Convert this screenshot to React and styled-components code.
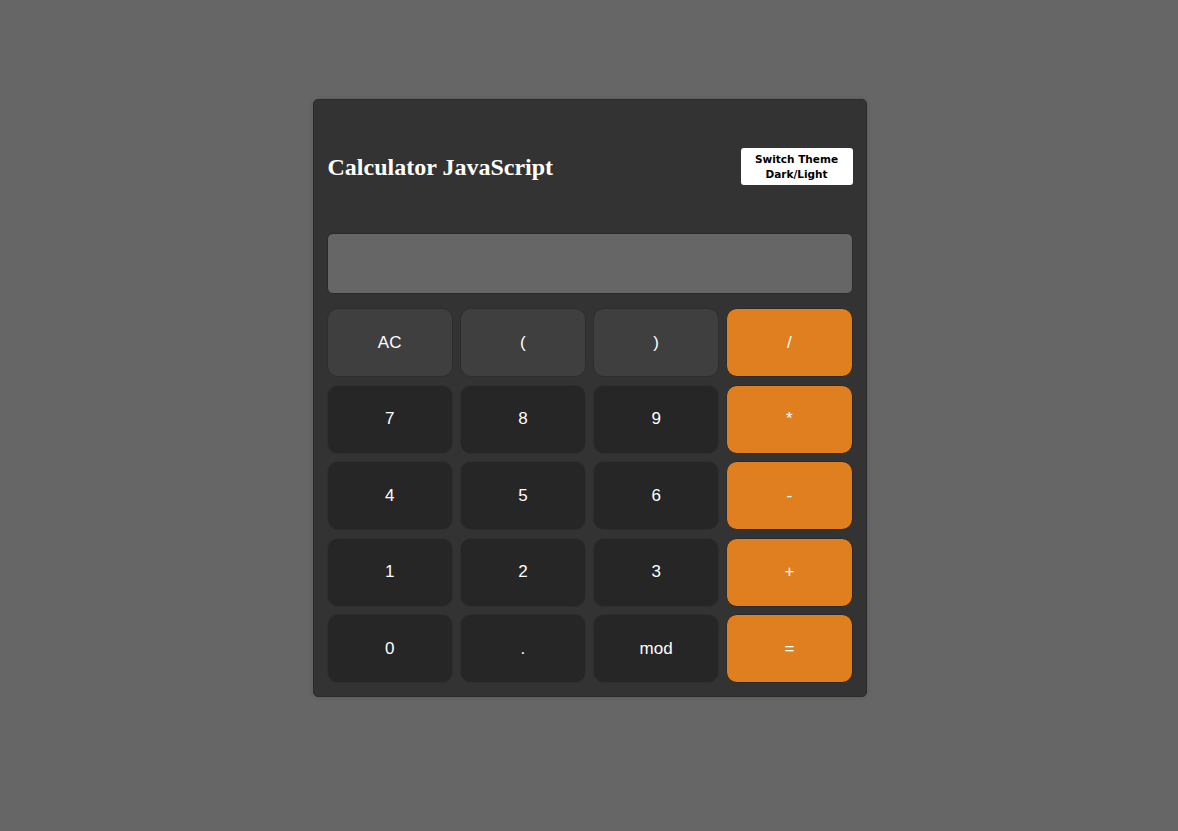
import React, { useState } from 'react'
import styled, { createGlobalStyle } from 'styled-components'

const keys = [
    { label: 'AC', kind: 'func' },
    { label: '(', kind: 'func' },
    { label: ')', kind: 'func' },
    { label: '/', kind: 'op' },
    { label: '7' }, { label: '8' }, { label: '9' },
    { label: '*', kind: 'op' },
    { label: '4' }, { label: '5' }, { label: '6' },
    { label: '-', kind: 'op' },
    { label: '1' }, { label: '2' }, { label: '3' },
    { label: '+', kind: 'op' },
    { label: '0' }, { label: '.' }, { label: 'mod' },
    { label: '=', kind: 'op' },
]

const App = () => {
    const [value, setValue] = useState('')

    return <Page>
        <GlobalStyle />
        <Card>
            <Header>
                <Title>Calculator JavaScript</Title>
                <ThemeButton>Switch Theme<br />Dark/Light</ThemeButton>
            </Header>

            <Display value={value} readOnly />

            <Keys>
                {keys.map(item => (
                    <Key key={item.label} kind={item.kind} onClick={() => setValue(value + item.label)}>
                        {item.label}
                    </Key>
                ))}
            </Keys>
        </Card>
    </Page>
}

const GlobalStyle = createGlobalStyle`
    html, body {
        margin: 0;
        background: #666666;
    }
`

const Page = styled.div`
    min-height: 831px;
    display: flex;
    justify-content: center;
    align-items: flex-start;
    padding-top: 99px;
    padding-left: 1px;
    box-sizing: border-box;
`

const Card = styled.div`
    width: 554px;
    box-sizing: border-box;
    background: #333333;
    border: 1px solid #2b2b2b;
    border-radius: 5px;
    box-shadow: 0 0 4px rgba(0, 0, 0, 0.15);
    padding: 0 13px 13px 13px;
    display: flex;
    flex-direction: column;
`

const Header = styled.div`
    height: 133px;
    display: flex;
    justify-content: space-between;
    align-items: center;
`

const Title = styled.h1`
    margin: 0 0 0 1px;
    font-family: "Liberation Serif", serif;
    font-weight: 700;
    font-size: 24px;
    line-height: 28px;
    color: #ffffff;
`

const ThemeButton = styled.button`
    width: 112px;
    height: 37px;
    border: none;
    border-radius: 3px;
    background: #ffffff;
    color: #000000;
    font-family: "DejaVu Sans", Verdana, sans-serif;
    font-weight: 700;
    font-size: 10.5px;
    line-height: 15px;
    padding: 0;
    cursor: pointer;
`

const Display = styled.input`
    height: 61px;
    box-sizing: border-box;
    margin-bottom: 14px;
    background: #666666;
    border: 1px solid #2a2a2a;
    border-radius: 6px;
    color: #ffffff;
    font-family: "Liberation Sans", Arial, sans-serif;
    font-size: 24px;
    text-align: right;
    padding: 0 12px;
    outline: none;
`

const Keys = styled.div`
    display: grid;
    grid-template-columns: repeat(4, 1fr);
    grid-auto-rows: 69px;
    column-gap: 7px;
    row-gap: 7.5px;
`

const Key = styled.button`
    border: 1px solid ${p => p.kind === 'op' ? '#2a2a2a' : '#2e2e2e'};
    border-radius: 11px;
    background: ${p => p.kind === 'op' ? '#df7f20' : p.kind === 'func' ? '#3f3f3f' : '#262626'};
    color: #ffffff;
    font-family: "Liberation Sans", Arial, sans-serif;
    font-size: 17px;
    cursor: pointer;
    padding: 0;
`

export default App
